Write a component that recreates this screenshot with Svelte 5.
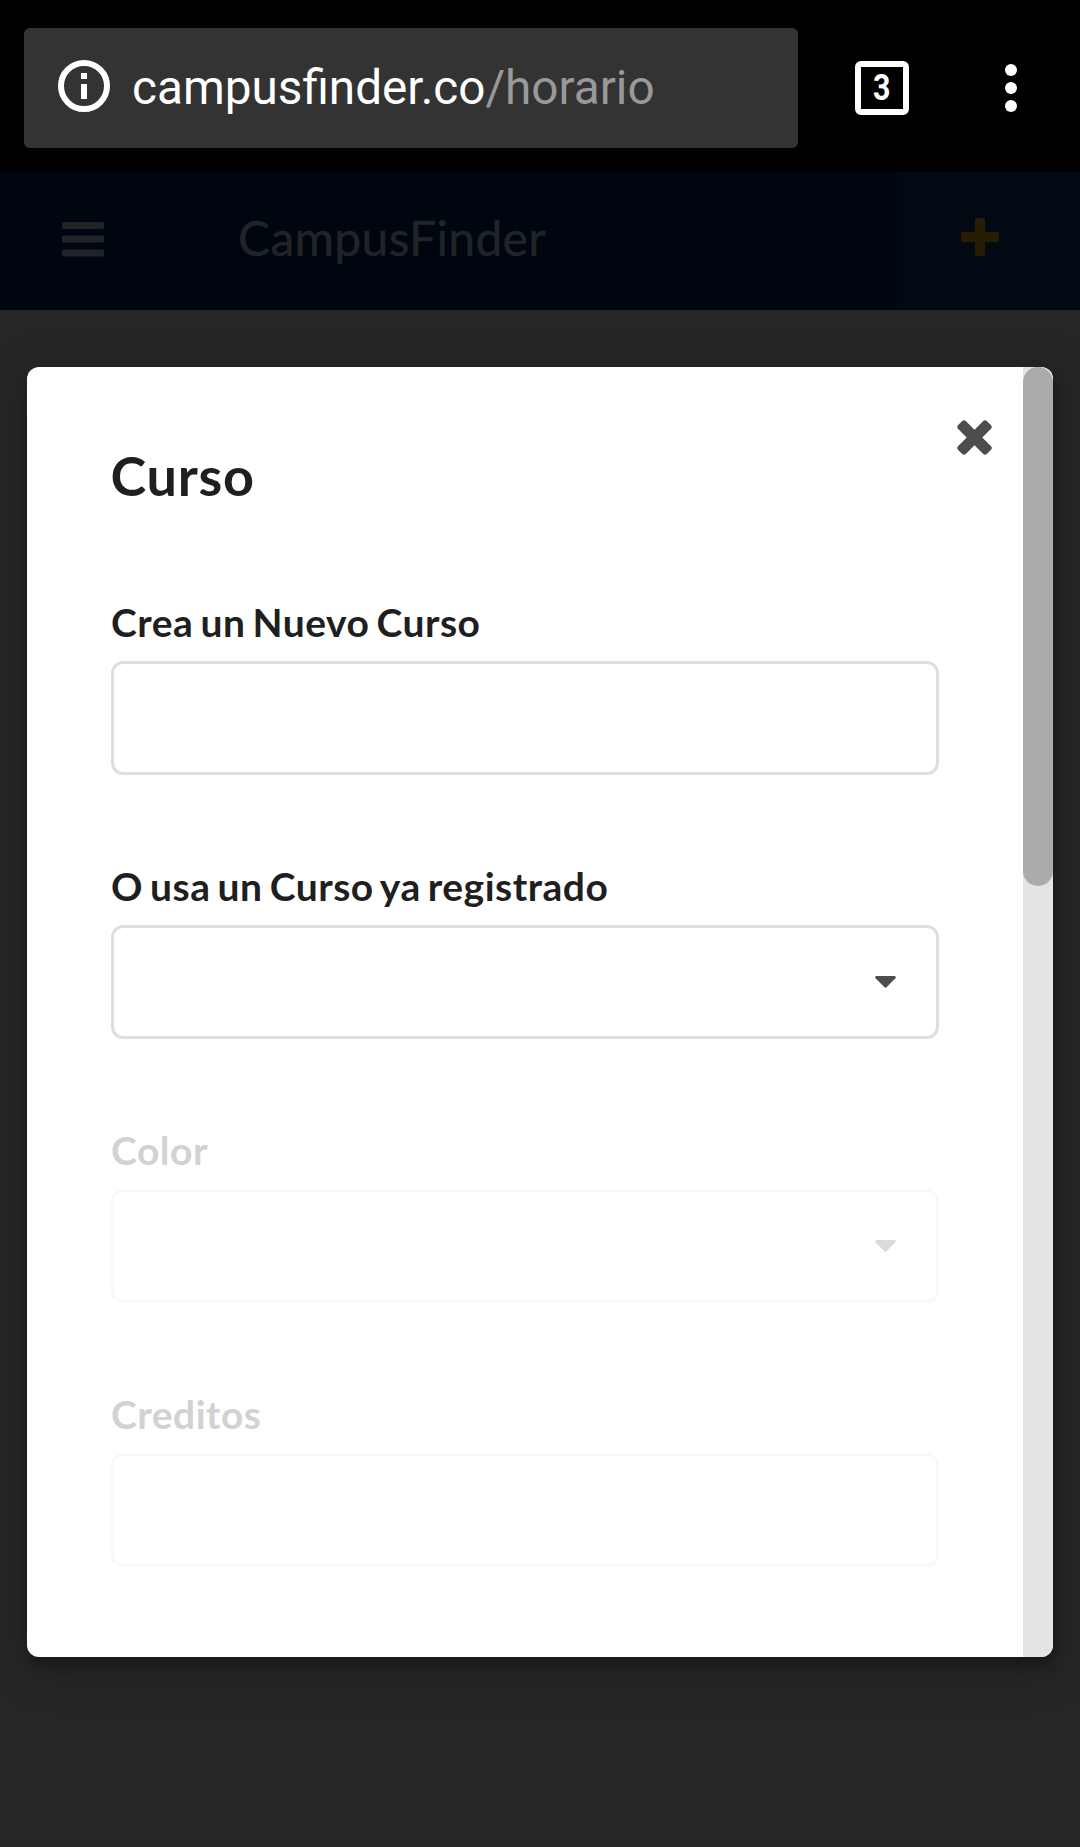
<script lang="ts">
  const fields = [
    { id: 'nuevo', label: 'Crea un Nuevo Curso', select: false, disabled: false },
    { id: 'registrado', label: 'O usa un Curso ya registrado', select: true, disabled: false },
    { id: 'color', label: 'Color', select: true, disabled: true },
    { id: 'creditos', label: 'Creditos', select: false, disabled: true }
  ];
</script>

<div class="screen">
  <header class="browser">
    <div class="address">
      <svg class="info" viewBox="0 0 52 52" aria-hidden="true">
        <circle cx="26" cy="26" r="23" fill="none" stroke="#fff" stroke-width="6" />
        <path d="M23 13h6v6h-6zM23 24h6v15h-6z" fill="#fff" />
      </svg>
      <span class="url">campusfinder.co<span class="path">/horario</span></span>
    </div>
    <div class="tabs"><span>3</span></div>
    <svg class="dots" viewBox="0 0 12 48" aria-hidden="true">
      <circle cx="6" cy="6" r="6" /><circle cx="6" cy="24" r="6" /><circle cx="6" cy="42" r="6" />
    </svg>
  </header>

  <nav class="appbar">
    <svg class="menu" viewBox="0 0 42 35" aria-hidden="true">
      <rect width="42" height="7" rx="1.5" /><rect y="13.5" width="42" height="7" rx="1.5" /><rect y="27.5" width="42" height="7" rx="1.5" />
    </svg>
    <span class="brand">CampusFinder</span>
    <div class="add">
      <svg viewBox="0 0 38 38" aria-hidden="true">
        <path d="M16 0h6q2 0 2 2v12h12q2 0 2 2v6q0 2-2 2H24v12q0 2-2 2h-6q-2 0-2-2V24H2q-2 0-2-2v-6q0-2 2-2h12V2q0-2 2-2z" />
      </svg>
    </div>
  </nav>

  <main>
    <section class="modal">
      <div class="content">
        <div class="close">
          <svg viewBox="0 0 35 35" aria-hidden="true">
            <path d="M5 1.2Q7 -.8 9 1.2L17.5 9.7 26 1.2Q28 -.8 30 1.2L33.8 5Q35.8 7 33.8 9L25.3 17.5 33.8 26Q35.8 28 33.8 30L30 33.8Q28 35.8 26 33.8L17.5 25.3 9 33.8Q7 35.8 5 33.8L1.2 30Q-.8 28 1.2 26L9.7 17.5 1.2 9Q-.8 7 1.2 5Z" />
          </svg>
        </div>
        <h1>Curso</h1>
        <form>
          {#each fields as field (field.id)}
            <div class="field" class:disabled={field.disabled}>
              <label for={field.id}>{field.label}</label>
              <div class="box" id={field.id}>
                {#if field.select}
                  <svg class="caret" viewBox="0 0 21 12" aria-hidden="true">
                    <path d="M1 0h19q1.4.9.4 2.2L11.5 11.3q-1 .9-2 0L.6 2.2Q-.4.9 1 0z" />
                  </svg>
                {/if}
              </div>
            </div>
          {/each}
        </form>
      </div>
      <div class="track"><div class="thumb"></div></div>
    </section>
  </main>
</div>

<style>
  :global(body) {
    margin: 0;
    background: #262626;
  }
  .screen {
    width: 1080px;
    height: 1847px;
    overflow: hidden;
    background: #262626;
    font-family: Lato, 'Liberation Sans', sans-serif;
  }
  svg {
    display: block;
    flex: none;
    overflow: visible;
  }
  .browser {
    box-sizing: border-box;
    height: 172px;
    padding: 28px 63px 24px 24px;
    display: flex;
    align-items: flex-start;
    background: #000;
  }
  .address {
    box-sizing: border-box;
    width: 774px;
    height: 120px;
    padding-left: 34px;
    display: flex;
    align-items: center;
    border-radius: 6px;
    background: #333;
  }
  .info {
    width: 52px;
    height: 52px;
    margin: 0 22px 4px 0;
  }
  .url {
    color: #fff;
    font: 400 47.7px/60px Roboto, sans-serif;
    white-space: nowrap;
  }
  .path {
    color: #999;
  }
  .tabs {
    box-sizing: border-box;
    width: 54px;
    height: 54px;
    margin: 33px 96px 0 57px;
    display: flex;
    align-items: center;
    justify-content: center;
    border: 6px solid #fff;
    border-radius: 6px;
    color: #fff;
    font: 700 37px/42px Roboto, sans-serif;
  }
  .tabs span {
    transform: scaleX(0.82);
  }
  .dots {
    width: 12px;
    height: 48px;
    margin-top: 36px;
    fill: #fff;
  }
  .appbar {
    box-sizing: border-box;
    height: 138px;
    display: flex;
    align-items: center;
    background: #00060f;
  }
  .menu {
    width: 42px;
    height: 35px;
    margin: 0 134px 4px 62px;
    fill: #212426;
  }
  .brand {
    margin-bottom: 6px;
    color: #212426;
    font-size: 48px;
    letter-spacing: 0.32px;
    line-height: 60px;
    -webkit-text-stroke: 0.4px #212426;
  }
  .add {
    width: 183px;
    height: 138px;
    margin-left: auto;
    display: flex;
    align-items: center;
    justify-content: center;
    background: #030912;
  }
  .add svg {
    width: 38px;
    height: 38px;
    margin-bottom: 8px;
    margin-right: 18px;
    fill: #261d02;
  }
  main {
    padding: 57px 27px 0;
  }
  .modal {
    height: 1290px;
    display: flex;
    border-radius: 12px;
    overflow: hidden;
    background: #fff;
    box-shadow: 3px 9px 9px 0 rgba(0, 0, 0, 0.2), 3px 9px 45px 6px rgba(0, 0, 0, 0.2);
  }
  .content {
    flex: 1;
    padding: 53px 84px 0;
  }
  .close {
    height: 35px;
    margin-right: -53px;
    display: flex;
    justify-content: flex-end;
  }
  .close svg {
    width: 35px;
    height: 35px;
    fill: #4d4d4d;
  }
  h1 {
    margin: -14px 0 0 -0.5px;
    color: #1f1f1f;
    font-size: 54px;
    font-weight: 700;
    letter-spacing: 0.7px;
    line-height: 70px;
  }
  form {
    margin-top: 87px;
    display: flex;
    flex-direction: column;
    gap: 87px;
  }
  label {
    display: block;
    height: 63px;
    color: #1f1f1f;
    font-size: 39px;
    font-weight: 700;
    letter-spacing: 0.5px;
    word-spacing: -2.9px;
    line-height: 48px;
  }
  .box {
    box-sizing: border-box;
    height: 114px;
    padding-right: 40.5px;
    display: flex;
    align-items: center;
    justify-content: flex-end;
    border: 3px solid #dedede;
    border-radius: 12px;
  }
  .caret {
    width: 21px;
    height: 12px;
    fill: #4d4d4d;
  }
  .disabled label {
    color: #d2d2d2;
  }
  .disabled .box {
    border-color: #f9f9f9;
  }
  .disabled .caret {
    fill: #dadada;
  }
  .track {
    width: 30px;
    background: #e4e4e4;
  }
  .thumb {
    height: 519px;
    border-radius: 15px;
    background: #ababab;
  }
</style>
